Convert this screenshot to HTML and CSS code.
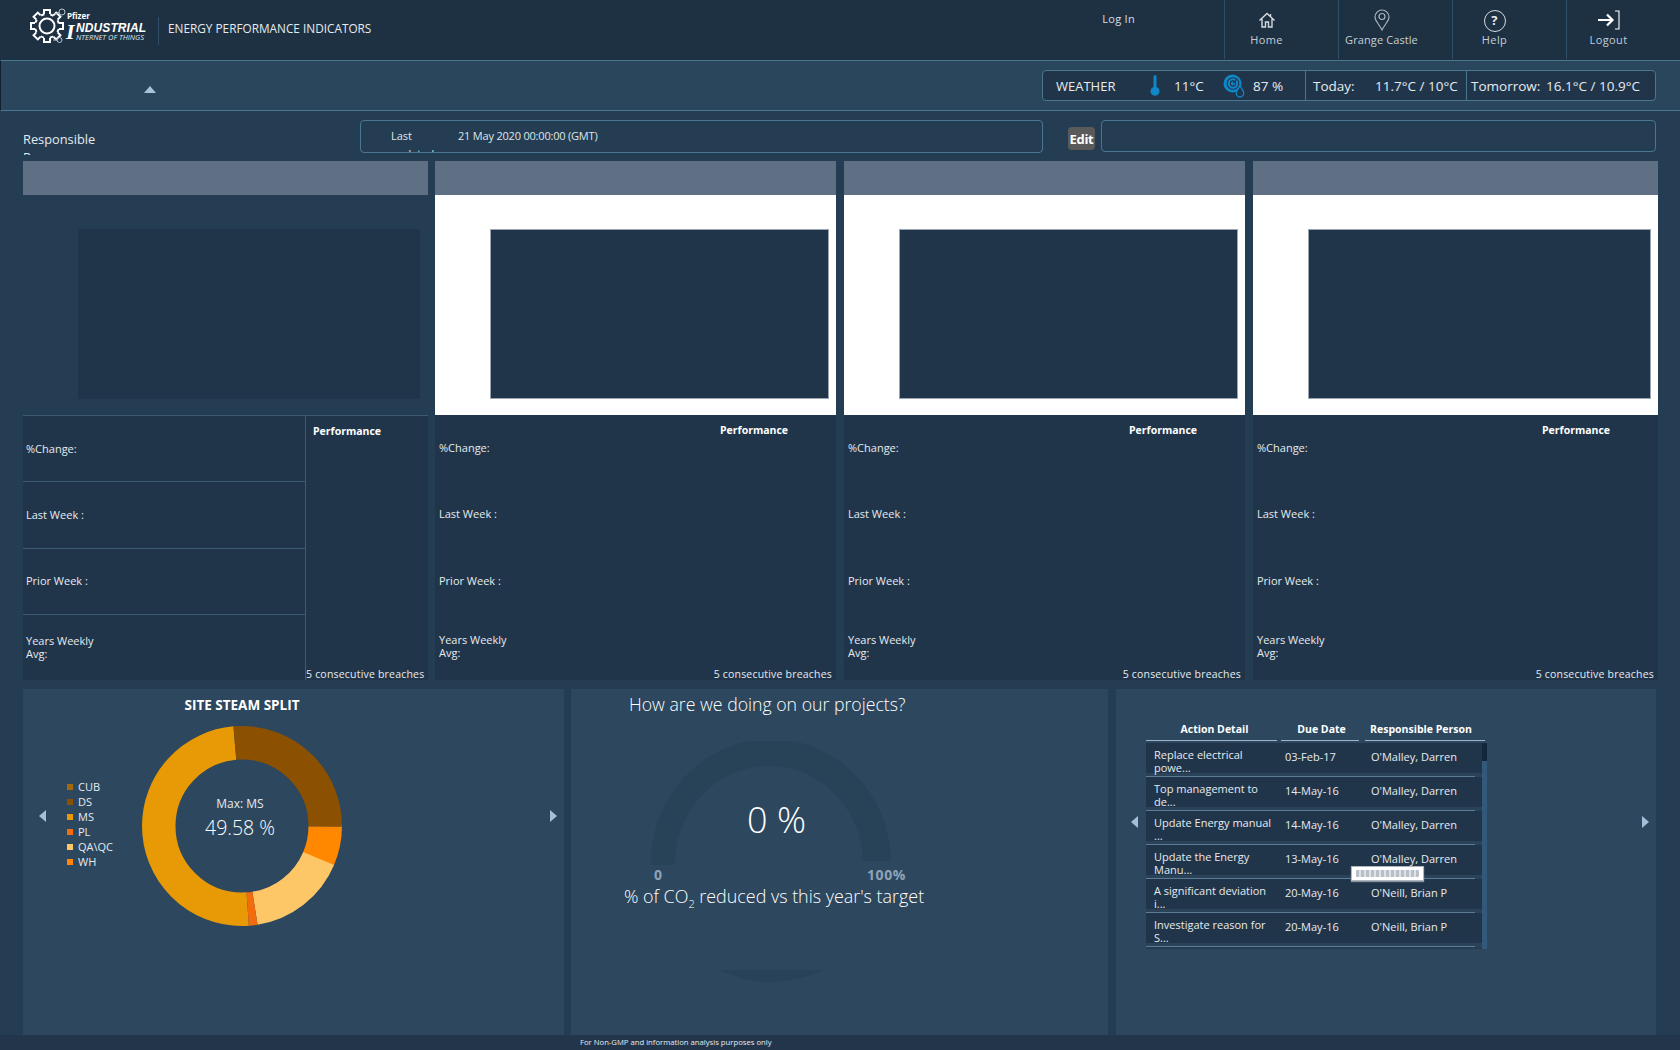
FILE: index.html
```html
<!DOCTYPE html>
<html lang="en">
<head>
  <meta charset="UTF-8" />
  <title>Energy Performance Indicators</title>
  <link rel="stylesheet" href="styles.css">
</head>
<body>

<!-- Top header -->
<header class="topbar">
  <div class="logo">
    <svg class="logo-gear" width="36" height="38" viewBox="0 0 36 38" fill="none" stroke="#fff" stroke-width="2">
      <g transform="translate(17 18)">
        <circle r="12" stroke-dasharray="3.42 6" stroke-dashoffset="-3"/>
        <circle r="7.500"/>
        <path d="M-3 -12V-16H3V-12"/>
        <path d="M-3 -12V-16H3V-12" transform="rotate(45)"/>
        <path d="M-3 -12V-16H3V-12" transform="rotate(90)"/>
        <path d="M-3 -12V-16H3V-12" transform="rotate(135)"/>
        <path d="M-3 -12V-16H3V-12" transform="rotate(180)"/>
        <path d="M-3 -12V-16H3V-12" transform="rotate(225)"/>
        <path d="M-3 -12V-16H3V-12" transform="rotate(270)"/>
        <path d="M-3 -12V-16H3V-12" transform="rotate(315)"/>
      </g>
      <g stroke="#b9c4ce" stroke-width="1">
        <circle cx="32" cy="4" r="3"/>
        <circle cx="29.500" cy="32" r="2.500"/>
        <path d="M24 6L29 4.500M23 32H27"/>
      </g>
    </svg>
    <div class="logo-text">
      <span class="logo-pfizer">Pfizer</span>
      <div class="logo-brand">
        <b class="logo-i">I</b>
        <div class="logo-words">
          <span class="logo-main">NDUSTRIAL</span>
          <span class="logo-sub">NTERNET OF THINGS</span>
        </div>
      </div>
    </div>
  </div>
  <div class="page-title">ENERGY PERFORMANCE INDICATORS</div>
  <div class="login">Log In</div>
  <nav class="nav">
    <a class="nav-item">
      <svg width="18" height="18" viewBox="0 0 18 18" fill="none" stroke="#d5dbe0" stroke-width="1.400"><path d="M1.500 9.500L9 2.500l7.500 7M4 8v8h3.500v-5h3v5H14V8M12.500 3v2.500"/></svg>
      <span>Home</span>
    </a>
    <a class="nav-item nav-site">
      <svg class="icon-pin" width="18" height="22" viewBox="0 0 18 22" fill="none" stroke="#aab4bd" stroke-width="1.200"><path d="M9 21C6 15 2 12 2 8a7 7 0 0 1 14 0c0 4-4 7-7 13z"/><circle cx="9" cy="7.500" r="3"/></svg>
      <span>Grange Castle</span>
    </a>
    <a class="nav-item">
      <div class="help-icon">?</div>
      <span>Help</span>
    </a>
    <a class="nav-item">
      <svg class="icon-logout" width="24" height="20" viewBox="0 0 24 20" fill="none" stroke="#fff"><path d="M1 10H15M10 4.500L15.500 10L10 15.500" stroke-width="2.200"/><path d="M18 1h4v18h-4" stroke-width="1.100"/></svg>
      <span>Logout</span>
    </a>
  </nav>
</header>

<!-- Toolbar with weather -->
<section class="toolbar">
  <div class="collapse-arrow"></div>
  <div class="weather">
    <div class="weather-now">
      <span class="w-title">WEATHER</span>
      <svg class="w-therm" width="10" height="22" viewBox="0 0 10 22" fill="#0f87c9"><path d="M3.500 1.500a1.500 1.500 0 0 1 3 0V12a4.500 4.500 0 1 1-3 0z"/></svg>
      <span class="w-temp">11°C</span>
      <svg class="w-hum" width="22" height="24" viewBox="0 0 22 24" fill="none" stroke="#0f87c9"><circle cx="9.500" cy="9.500" r="9" fill="#0f87c9" stroke="none"/><circle cx="10" cy="9.500" r="5.800" stroke="#21364a" stroke-width="1.100"/><circle cx="10" cy="9.500" r="2.600" stroke="#21364a" stroke-width="1.100"/><path d="M10 9.500L14 5" stroke="#21364a" stroke-width="1.100"/><path d="M17 12c2 3 3.800 5 3.800 7a3.800 3.800 0 0 1-7.600 0c0-2 1.800-4 3.800-7z" fill="#21364a" stroke-width="1.300"/></svg>
      <span>87 %</span>
    </div>
    <div class="weather-today"><span class="w-day">Today:</span><span>11.7°C / 10°C</span></div>
    <div class="weather-tomorrow"><span class="w-day2">Tomorrow:</span><span>16.1°C / 10.9°C</span></div>
  </div>
</section>

<!-- Filter row -->
<section class="filters">
  <div class="responsible">Responsible Person</div>
  <div class="updated-box">
    <div class="updated-label">Last updated :</div>
    <div class="updated-value">21 May 2020 00:00:00 (GMT)</div>
  </div>
  <button class="edit-btn">Edit</button>
  <div class="comment-box"></div>
</section>

<!-- KPI cards -->
<section class="cards">
  <div class="card card-first">
    <div class="card-head"></div>
    <div class="card-chart"><div class="chart-block"></div></div>
    <div class="stats">
      <div class="stat-list">
        <div class="stat">%Change:</div>
        <div class="stat">Last Week :</div>
        <div class="stat">Prior Week :</div>
        <div class="stat">Years Weekly Avg:</div>
      </div>
      <div class="perf">
        <div class="perf-title">Performance</div>
        <div class="perf-note">5 consecutive breaches</div>
      </div>
    </div>
  </div>

  <div class="card">
    <div class="card-head"></div>
    <div class="card-chart"><div class="chart-block"></div></div>
    <div class="stats">
      <div class="stat-list">
        <div class="stat">%Change:</div>
        <div class="stat">Last Week :</div>
        <div class="stat">Prior Week :</div>
        <div class="stat">Years Weekly Avg:</div>
      </div>
      <div class="perf">
        <div class="perf-title">Performance</div>
        <div class="perf-note">5 consecutive breaches</div>
      </div>
    </div>
  </div>

  <div class="card">
    <div class="card-head"></div>
    <div class="card-chart"><div class="chart-block"></div></div>
    <div class="stats">
      <div class="stat-list">
        <div class="stat">%Change:</div>
        <div class="stat">Last Week :</div>
        <div class="stat">Prior Week :</div>
        <div class="stat">Years Weekly Avg:</div>
      </div>
      <div class="perf">
        <div class="perf-title">Performance</div>
        <div class="perf-note">5 consecutive breaches</div>
      </div>
    </div>
  </div>

  <div class="card card-last">
    <div class="card-head"></div>
    <div class="card-chart"><div class="chart-block"></div></div>
    <div class="stats">
      <div class="stat-list">
        <div class="stat">%Change:</div>
        <div class="stat">Last Week :</div>
        <div class="stat">Prior Week :</div>
        <div class="stat">Years Weekly Avg:</div>
      </div>
      <div class="perf">
        <div class="perf-title">Performance</div>
        <div class="perf-note">5 consecutive breaches</div>
      </div>
    </div>
  </div>
</section>

<!-- Bottom panels -->
<section class="panels">
  <div class="panel panel-steam">
    <h2 class="steam-title">SITE STEAM SPLIT</h2>
    <div class="steam-body">
      <div class="arrow arrow-left"></div>
      <ul class="legend">
        <li><i class="sw-cub"></i>CUB</li>
        <li><i class="sw-ds"></i>DS</li>
        <li><i class="sw-ms"></i>MS</li>
        <li><i class="sw-pl"></i>PL</li>
        <li><i class="sw-qa"></i>QA\QC</li>
        <li><i class="sw-wh"></i>WH</li>
      </ul>
      <div class="donut">
        <svg width="200" height="200" viewBox="0 0 200 200" fill="none" stroke-width="33.500">
          <g transform="rotate(-90 100 100)">
            <circle cx="100" cy="100" r="83.250" pathLength="360" stroke="#e79a05" stroke-dasharray="179 181" stroke-dashoffset="-176"/>
            <circle cx="100" cy="100" r="83.250" pathLength="360" stroke="#8b5000" stroke-dasharray="95.500 264.500" stroke-dashoffset="5"/>
            <circle cx="100" cy="100" r="83.250" pathLength="360" stroke="#ff8800" stroke-dasharray="23 337" stroke-dashoffset="-90.500"/>
            <circle cx="100" cy="100" r="83.250" pathLength="360" stroke="#fdc667" stroke-dasharray="58 302" stroke-dashoffset="-113"/>
            <circle cx="100" cy="100" r="83.250" pathLength="360" stroke="#f26b0c" stroke-dasharray="5 355" stroke-dashoffset="-171"/>
          </g>
        </svg>
        <div class="donut-label">
          <div class="donut-max">Max: MS</div>
          <div class="donut-value">49.58 %</div>
        </div>
      </div>
      <div class="arrow arrow-right"></div>
    </div>
  </div>

  <div class="panel panel-gauge">
    <h2 class="gauge-title">How are we doing on our projects?</h2>
    <div class="gauge">
      <svg width="240" height="124" viewBox="0 0 240 124" fill="#284358"><path d="M0 124A120 124 0 0 1 240 120H212A93 96 0 0 0 24 124z"/></svg>
      <div class="gauge-value">0 %</div>
    </div>
    <div class="gauge-scale"><span>0</span><span>100%</span></div>
    <div class="gauge-caption">% of CO<sub>2</sub> reduced vs this year's target</div>
    <svg class="gauge-sliver" width="104" height="12" viewBox="0 0 104 12" fill="#284358"><path d="M0 0H104Q52 24 0 0z"/></svg>
  </div>

  <div class="panel panel-actions">
    <div class="arrow arrow-left"></div>
    <div class="actions">
      <div class="actions-head">
        <div class="ah-detail">Action Detail</div>
        <div class="ah-date">Due Date</div>
        <div class="ah-person">Responsible Person</div>
      </div>
      <div class="actions-body">
        <div class="actions-rows">
          <div class="row"><div class="c-detail">Replace electrical powe...</div><div class="c-date">03-Feb-17</div><div class="c-person">O'Malley, Darren</div></div>
          <div class="row"><div class="c-detail">Top management to de...</div><div class="c-date">14-May-16</div><div class="c-person">O'Malley, Darren</div></div>
          <div class="row"><div class="c-detail">Update Energy manual ...</div><div class="c-date">14-May-16</div><div class="c-person">O'Malley, Darren</div></div>
          <div class="row"><div class="c-detail">Update the Energy Manu...</div><div class="c-date">13-May-16</div><div class="c-person">O'Malley, Darren</div></div>
          <div class="row"><div class="c-detail">A significant deviation i...</div><div class="c-date">20-May-16</div><div class="c-person">O'Neill, Brian P</div></div>
          <div class="row"><div class="c-detail">Investigate reason for S...</div><div class="c-date">20-May-16</div><div class="c-person">O'Neill, Brian P</div></div>
        </div>
        <div class="scroll"><div class="scroll-thumb"></div></div>
      </div>
      <div class="loader"><div class="loader-bar"></div></div>
    </div>
    <div class="arrow arrow-right"></div>
  </div>
</section>

<footer class="foot">For Non-GMP and information analysis purposes only</footer>

</body>
</html>
```

FILE: styles.css
```css
/* ----------  BASE  ---------- */
:root {
  --page:    #243d53;
  --top:     #1e3143;
  --bar:     #29465d;
  --panel:   #2c475e;
  --dark:    #21354a;
  --line:    #4b7690;
  --head:    #5f7085;
  --sans:    "Open Sans", "Noto Sans", sans-serif;
}

* { box-sizing: border-box; }

body {
  margin: 0;
  width: 1680px;
  height: 1050px;
  overflow: hidden;
  display: flex;
  flex-direction: column;
  background: var(--page);
  color: #fff;
  font-family: var(--sans);
  font-size: 11px;
}

/* ----------  TOP HEADER  ---------- */
.topbar {
  height: 60px;
  flex: none;
  display: flex;
  background: var(--top);
}

.logo {
  display: flex;
  width: 128px;
  height: 38px;
  margin: 8px 0 0 30px;
}
.logo-gear { flex: none; }

.logo-text {
  display: flex;
  flex-direction: column;
  white-space: nowrap;
}
.logo-pfizer { font-size: 8px; font-weight: 700; line-height: 9px; margin: 3px 0 0 1px; }
.logo-brand  { display: flex; margin-top: 2px; }
.logo-i      { font-family: "Liberation Serif", serif; font-style: italic; font-size: 22px; line-height: 20px; width: 10px; }
.logo-words  { display: flex; flex-direction: column; font-style: italic; }
.logo-main   { font-family: "Liberation Sans", sans-serif; font-size: 12px; font-weight: 700; line-height: 12px; letter-spacing: .1px; }
.logo-sub    { font-size: 7.500px; line-height: 7px; color: #dfe5ea; }

.page-title {
  height: 28px;
  margin-top: 17px;
  padding-left: 9px;
  border-left: 1px solid #2f5068;
  font-size: 11.800px;
  line-height: 22px;
  color: #e6ebef;
}

.login {
  margin: 11px 89px 0 auto;
  line-height: 16px;
  letter-spacing: .3px;
  color: #d9dfe4;
}

.nav { display: flex; height: 59px; }
.nav-item {
  width: 114px;
  display: flex;
  flex-direction: column;
  align-items: center;
  justify-content: flex-end;
  padding: 0 30px 11px 0;
  gap: 3px;
  border-left: 1px solid #2f5068;
  letter-spacing: .4px;
  color: #c5ced6;
  line-height: 16px;
  white-space: nowrap;
}
.nav-site    { letter-spacing: .1px; padding-right: 28px; }
.icon-pin    { margin-bottom: -2px; }
.icon-logout { margin-bottom: -1px; }
.help-icon {
  width: 22px;
  height: 22px;
  flex: none;
  border: 1.500px solid #d5dbe0;
  border-radius: 50%;
  text-align: center;
  font-size: 13px;
  font-weight: 700;
  line-height: 19px;
  color: #e6ebef;
  margin-bottom: -3px;
}

/* ----------  TOOLBAR / WEATHER  ---------- */
.toolbar {
  height: 51px;
  flex: none;
  display: flex;
  align-items: center;
  padding: 0 24px 0 143px;
  background: var(--bar);
  border-top: 1px solid var(--line);
  border-bottom: 1px solid var(--line);
  border-left: 1px solid #10202e;
}
.collapse-arrow {
  width: 0;
  height: 0;
  margin-top: 8px;
  border-left: 6px solid transparent;
  border-right: 6px solid transparent;
  border-bottom: 7px solid #a9c3d6;
}

.weather {
  width: 614px;
  height: 31px;
  margin-left: auto;
  display: flex;
  background: var(--dark);
  border: 1px solid var(--line);
  border-radius: 4px;
  font-size: 13.500px;
  line-height: 30px;
  color: #e6ebef;
  white-space: nowrap;
}
.weather-now {
  width: 262px;
  display: flex;
  align-items: center;
  padding-left: 13px;
}
.w-title { width: 94px; font-size: 13px; }
.w-therm { margin-right: 14px; }
.w-temp  { width: 49px; }
.w-hum   { margin-right: 8px; }

.weather-today {
  width: 161px;
  padding-left: 7px;
  border-left: 1px solid var(--line);
}
.w-day { display: inline-block; width: 62px; }

.weather-tomorrow {
  padding-left: 4px;
  border-left: 1px solid var(--line);
}
.w-day2 { display: inline-block; width: 75px; }

/* ----------  FILTER ROW  ---------- */
.filters {
  height: 50px;
  flex: none;
  display: flex;
  align-items: flex-start;
  padding: 9px 24px 0 23px;
}
.responsible {
  width: 80px;
  height: 25px;
  margin-top: 10px;
  overflow: hidden;
  font-size: 12.800px;
  line-height: 18px;
  color: #e6ebef;
}
.updated-box {
  width: 683px;
  height: 33px;
  margin-left: 257px;
  display: flex;
  overflow: hidden;
  background: var(--page);
  border: 1px solid var(--line);
  border-radius: 4px;
  padding: 7px 0 0 30px;
  line-height: 15px;
  color: #dfe5ea;
}
.updated-label { width: 67px; padding-right: 20px; line-height: 18px; margin-top: -1px; }
.updated-value { letter-spacing: -.2px; }

.edit-btn {
  width: 27px;
  height: 23px;
  margin: 7px 6px 0 25px;
  padding: 0;
  border: none;
  border-radius: 4px;
  background: #5a5a5a;
  color: #fff;
  font-family: var(--sans);
  font-size: 13px;
  font-weight: 700;
  letter-spacing: -.3px;
}
.comment-box {
  flex: 1;
  height: 32px;
  border: 1px solid var(--line);
  border-radius: 4px;
}

/* ----------  KPI CARDS  ---------- */
.cards {
  height: 519px;
  flex: none;
  display: flex;
  padding-left: 23px;
}
.card {
  width: 401px;
  margin-right: 8px;
  display: flex;
  flex-direction: column;
}
.card-first { width: 405px; margin-right: 7px; }
.card-last  { width: 405px; margin-right: 0; }

.card-head { height: 34px; background: var(--head); }

.card-chart {
  height: 220px;
  display: flex;
  padding: 34px 7px 16px 55px;
  background: #fff;
}
.card-first .card-chart { background: var(--page); padding-right: 8px; }
.chart-block {
  flex: 1;
  background: var(--dark);
  border: 1px solid #9aa6b2;
}
.card-first .chart-block { border: none; }

.stats {
  flex: 1;
  display: flex;
  background: var(--dark);
}
.stat-list { flex: 1; display: flex; flex-direction: column; }
.stat {
  flex: 1;
  display: flex;
  align-items: center;
  padding: 0 4px 1px;
  color: #e6ebef;
  line-height: 13px;
}
.stat:last-child { padding-right: calc(100% - 78px); }

.perf {
  width: 123px;
  flex: none;
  display: flex;
  flex-direction: column;
  justify-content: space-between;
  padding-top: 8px;
  padding-right: 4px;
}
.perf-title { padding-left: 7px; font-size: 10.500px; font-weight: 700; line-height: 15px; }
.perf-note  { text-align: right; font-size: 10.500px; line-height: 12px; letter-spacing: .2px; color: #e6ebef; white-space: nowrap; }

.card-first .stats { border-top: 1px solid #3c5a72; }
.card-first .stat { padding-left: 3px; }
.card-first .stat + .stat { border-top: 1px solid #3c5a72; }
.card-first .perf { border-left: 1px solid #3c5a72; }

/* ----------  BOTTOM PANELS  ---------- */
.panels {
  flex: 1;
  display: flex;
  padding: 9px 0 0 23px;
}
.panel {
  background: var(--panel);
  height: 346px;
}
.panel-steam   { width: 541px; margin-right: 7px; }
.panel-gauge   { width: 537px; margin-right: 8px; }
.panel-actions { width: 540px; display: flex; align-items: flex-start; }

.arrow {
  width: 0;
  height: 0;
  flex: none;
  border-top: 6px solid transparent;
  border-bottom: 6px solid transparent;
}
.arrow-left  { border-right: 7px solid #a5bfd9; }
.arrow-right { border-left: 7px solid #a5bfd9; }

/* steam donut */
.steam-title {
  margin: 0;
  padding-top: 7px;
  text-align: center;
  width: 438px;
  font-size: 13.500px;
  line-height: 18px;
}
.steam-body {
  display: flex;
  align-items: flex-start;
  padding: 0 7px 0 16px;
}
.steam-body .arrow { margin-top: 96px; }
.steam-body .arrow-right { margin-left: auto; }

.legend {
  list-style: none;
  margin: 65px 0 0 21px;
  padding: 0;
  width: 75px;
  color: #e6ebef;
}
.legend li { display: flex; align-items: center; height: 15px; gap: 5px; }
.legend i  { width: 6px; height: 6px; }
.sw-cub { background: #a0690c; }
.sw-ds  { background: #8b5000; }
.sw-ms  { background: #e79a05; }
.sw-pl  { background: #f26b0c; }
.sw-qa  { background: #fdc667; }
.sw-wh  { background: #ff8800; }

.donut { position: relative; width: 200px; height: 200px; margin-top: 12px; }
.donut svg { display: block; }
.donut-label {
  position: absolute;
  top: 68px;
  left: -2px;
  width: 200px;
  text-align: center;
}
.donut-max   { font-size: 12px; line-height: 19px; color: #e6ebef; }
.donut-value { font-size: 19.500px; line-height: 30px; font-weight: 300; }

/* gauge */
.gauge-title {
  margin: 0;
  padding: 4px 0 0 58px;
  font-size: 17.700px;
  font-weight: 300;
  line-height: 22px;
}
.gauge {
  position: relative;
  width: 240px;
  margin: 26px 0 0 80px;
}
.gauge svg { display: block; }
.gauge-value {
  position: absolute;
  top: 56px;
  left: 96px;
  font-size: 36px;
  line-height: 46px;
  font-weight: 300;
  white-space: nowrap;
}
.gauge-scale {
  display: flex;
  justify-content: space-between;
  width: 252px;
  margin-left: 83px;
  font-size: 14px;
  font-weight: 700;
  line-height: 20px;
  letter-spacing: .6px;
  color: #8ea3b8;
}
.gauge-caption {
  margin: 0 0 0 53px;
  font-size: 17.900px;
  font-weight: 300;
  line-height: 22px;
  white-space: nowrap;
}
.gauge-caption sub { font-size: 11px; line-height: 0; }
.gauge-sliver { display: block; margin: 63px 0 0 148px; }

/* actions table */
.panel-actions .arrow { margin-top: 127px; }
.panel-actions .arrow-left  { margin-left: 15px; margin-right: 8px; }
.panel-actions .arrow-right { margin-left: auto; margin-right: 7px; }

.actions {
  position: relative;
  width: 341px;
  margin-top: 33px;
}
.actions-head { display: flex; height: 19px; font-size: 10.500px; font-weight: 700; text-align: center; line-height: 14px; white-space: nowrap; }
.ah-detail { width: 131px; margin-right: 4px; padding-left: 6px; border-bottom: 1px solid #9db4c8; }
.ah-date   { width: 78px; margin-right: 6px; padding-left: 3px; border-bottom: 1px solid #9db4c8; }
.ah-person { width: 120px; padding-right: 8px; border-bottom: 1px solid #9db4c8; }

.actions-body {
  display: flex;
  height: 206px;
  margin-top: 2px;
  background: #253c53;
}
.actions-rows { flex: 1; }
.row {
  display: flex;
  height: 34px;
  padding-bottom: 8px;
  overflow: hidden;
  align-items: center;
  background:
    linear-gradient(#5c7c95, #5c7c95) left bottom / calc(100% - 7px) 1px no-repeat,
    linear-gradient(#2a4359, #2a4359) left bottom / 100% 4px no-repeat,
    var(--dark);
  color: #e6ebef;
}
.c-detail { width: 139px; height: 33px; padding: 8px 8px 0 8px; line-height: 13px; flex: none; }
.c-date   { width: 86px; }
.c-person { white-space: nowrap; }

.scroll { width: 5px; background: #33597a; }
.scroll-thumb { height: 18px; background: #12263c; }

.loader {
  position: absolute;
  top: 144px;
  left: 205px;
  width: 73px;
  height: 15px;
  padding: 3px 4px;
  background: #fff;
  border: 1px solid #aeb6be;
  box-shadow: 0 1px 1px #8c96a0;
}
.loader-bar {
  height: 7px;
  background: repeating-linear-gradient(90deg, #b9bfc6 0 3px, #dfe2e6 3px 5px);
  border-radius: 1px;
}

/* ----------  FOOTER  ---------- */
.foot {
  height: 15px;
  flex: none;
  padding-left: 580px;
  background: #22354a;
  font-size: 7.700px;
  line-height: 15px;
  color: #e6ebef;
}
```
